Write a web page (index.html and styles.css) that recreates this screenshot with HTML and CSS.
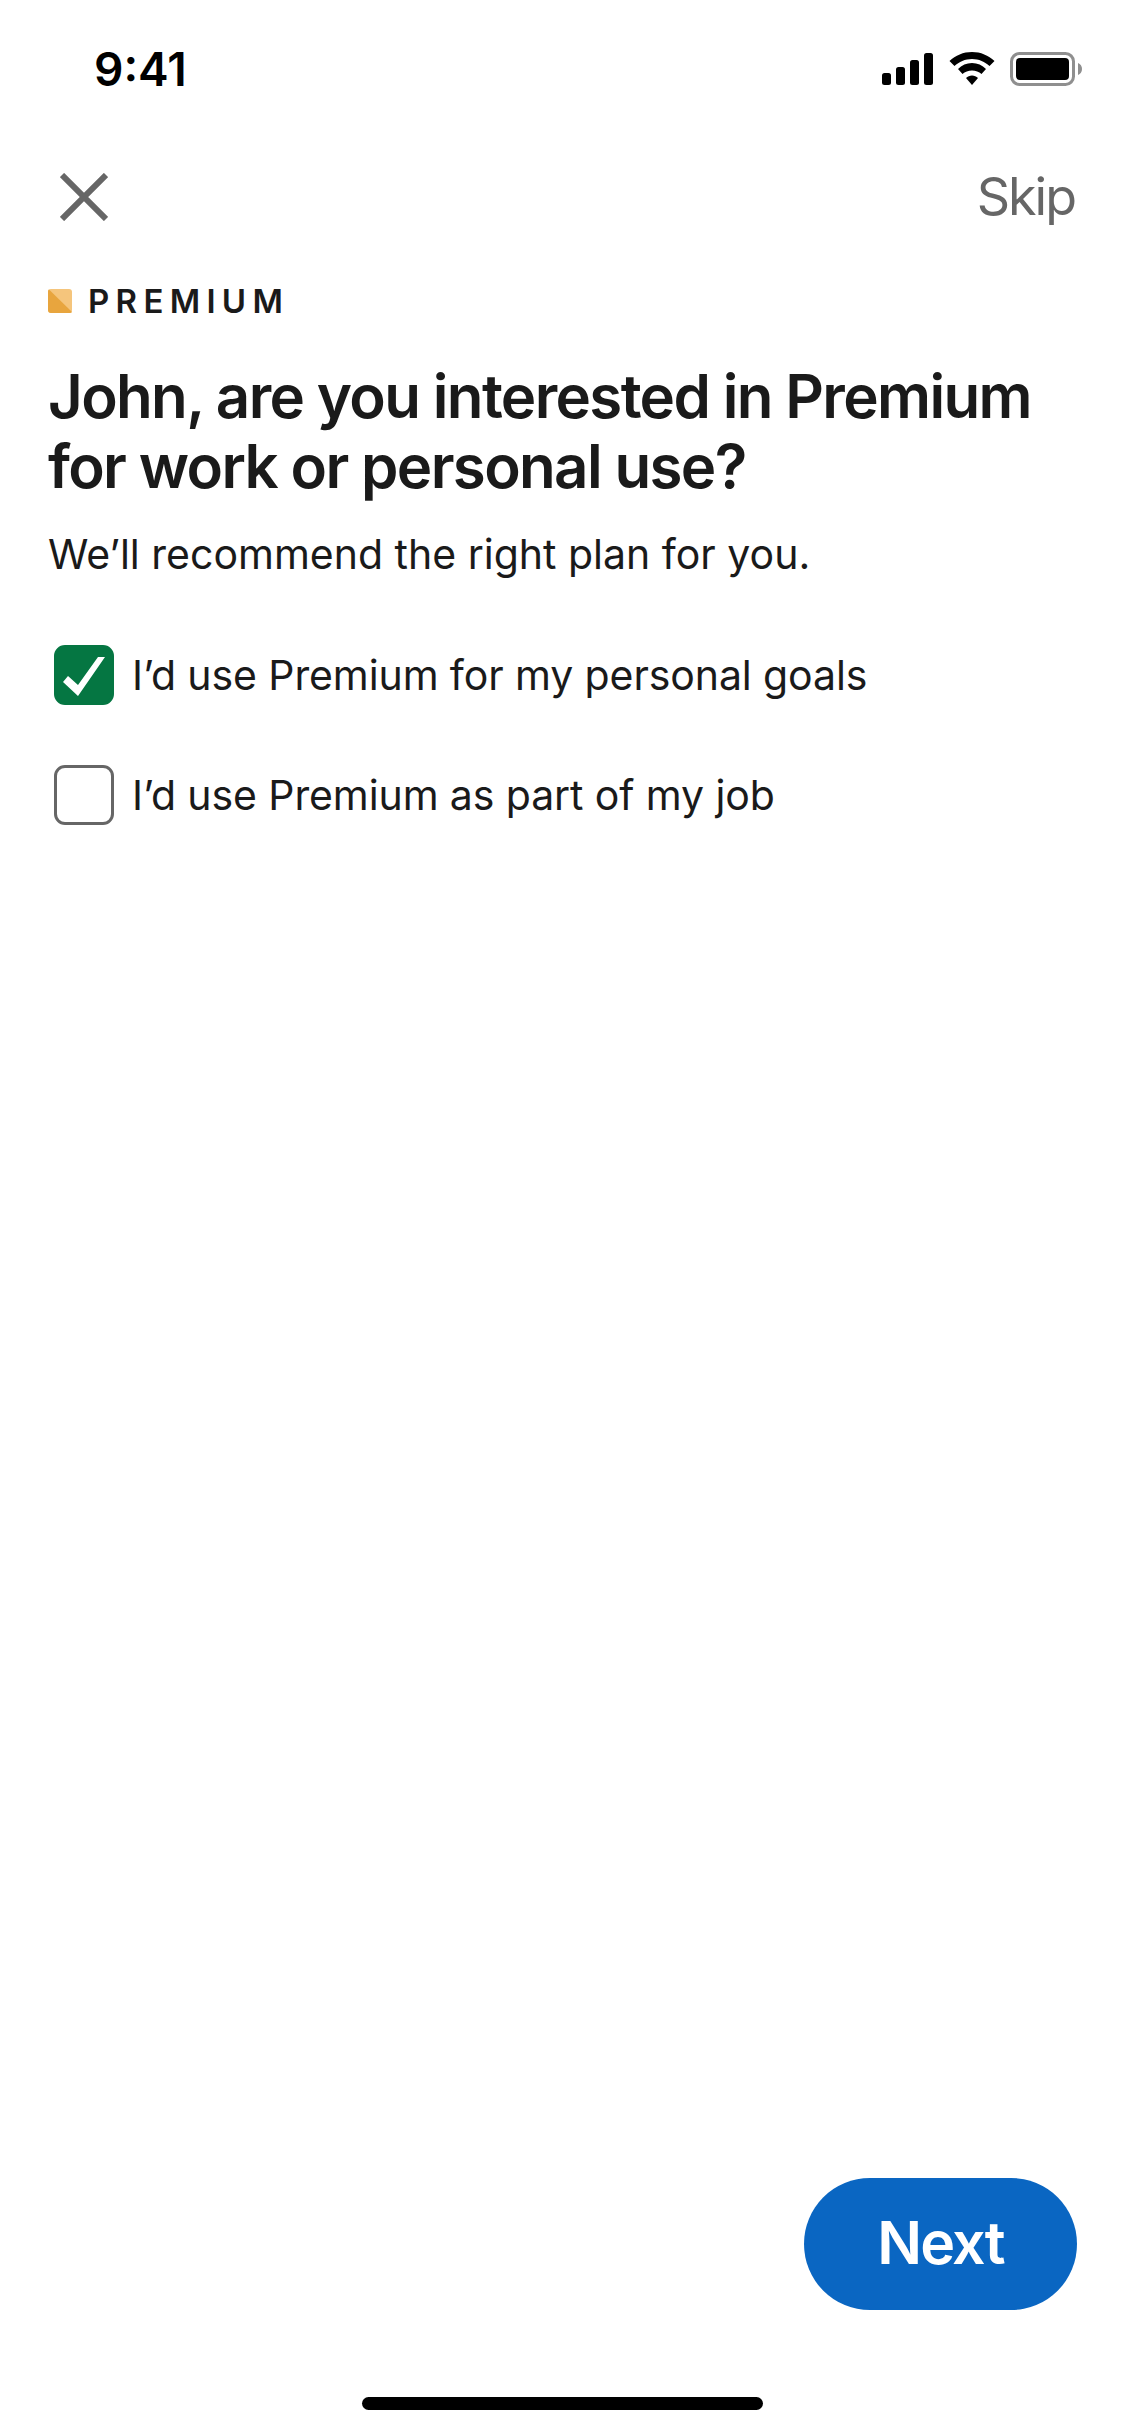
FILE: index.html
```html
<!DOCTYPE html>
<html lang="en">
<head>
<meta charset="utf-8">
<title>Premium</title>
<link rel="stylesheet" href="styles.css">
</head>
<body>
<div class="screen">
  <header class="status">
    <span class="time">9:41</span>
    <div class="status-icons">
      <svg class="ic-signal" width="52" height="32" viewBox="0 0 52 32"><rect x="0" y="20" width="9" height="12" rx="2.500"/><rect x="14" y="14" width="9" height="18" rx="2.500"/><rect x="28" y="7" width="9" height="25" rx="2.500"/><rect x="42" y="0" width="9" height="32" rx="2.500"/></svg>
      <svg class="ic-wifi" width="46" height="34" viewBox="0 0 46 34"><path d="M23 0C14.300 0 6.500 3.400 0.500 9L5.500 14C10 9.800 16.200 7 23 7S36 9.800 40.500 14L45.500 9C39.500 3.400 31.700 0 23 0Z"/><path d="M23 11C17.500 11 12.800 13.300 9 17L13.500 22C16 19.800 19.300 18.500 23 18.500S30 19.800 32.500 22L37 17C33.200 13.300 28.500 11 23 11Z"/><path d="M23 23.500C20.700 23.500 18.700 24.400 17 26L23 33L29 26C27.300 24.400 25.300 23.500 23 23.500Z"/></svg>
      <svg class="ic-battery" width="73" height="34" viewBox="0 0 73 34"><rect x="1.500" y="1.500" width="62" height="31" rx="8" fill="none" stroke="#8f8f8f" stroke-width="3"/><rect x="6" y="6" width="53" height="22" rx="4"/><path d="M68 11C70.500 12 72 14.300 72 17S70.500 22 68 23Z" fill="#8f8f8f"/></svg>
    </div>
  </header>

  <nav class="topbar">
    <svg class="ic-close" width="48" height="48" viewBox="0 0 48 48"><path d="M2 2L46 46M46 2L2 46" fill="none" stroke="#666666" stroke-width="6"/></svg>
    <span class="skip">Skip</span>
  </nav>

  <main class="content">
    <div class="brand">
      <svg class="ic-brand" width="24" height="24" viewBox="0 0 24 24"><rect width="24" height="24" rx="3" fill="#f5c57c"/><path d="M0 3C0 1.500 0.500 0.800 1 0.500L24 23C23.600 23.600 22.500 24 21 24H3C1.300 24 0 22.700 0 21Z" fill="#e8a53e"/></svg>
      <span class="brand-name">PREMIUM</span>
    </div>
    <h1 class="title">John, are you interested in Premium for work or personal use?</h1>
    <p class="subtitle">We’ll recommend the right plan for you.</p>
    <ul class="options">
      <li class="option">
        <span class="box box-on"><svg class="check" width="60" height="60" viewBox="0 0 60 60"><polygon points="9,37 14,31 24,40 44,12 51,12 24,51" fill="#ffffff"/></svg></span>
        <span>I’d use Premium for my personal goals</span>
      </li>
      <li class="option">
        <span class="box"></span>
        <span>I’d use Premium as part of my job</span>
      </li>
    </ul>
  </main>

  <footer class="footer">
    <button class="next" type="button">Next</button>
    <div class="home"></div>
  </footer>
</div>
</body>
</html>
```
FILE: styles.css
```css
* { box-sizing: border-box; }
html, body { margin: 0; padding: 0; background: #ffffff; }
body { font-family: Inter, "Liberation Sans", sans-serif; color: #1a1a1a; }

.screen { width: 1125px; height: 2436px; display: flex; flex-direction: column; }

.status { height: 152px; display: flex; justify-content: space-between; align-items: flex-start; padding: 46px 42px 0 94px; }
.time { font-size: 46px; line-height: 46px; font-weight: 600; color: #000000; }
.status-icons { display: flex; align-items: center; gap: 15px; padding-top: 6px; }
.status-icons svg { display: block; fill: #000000; }

.topbar { height: 90px; display: flex; justify-content: space-between; align-items: center; padding: 0 50px 0 60px; }
.ic-close { display: block; }
.skip { font-size: 52px; line-height: 60px; letter-spacing: -2px; color: #666666; }

.content { flex: 1; padding: 0 48px; }
.brand { display: flex; align-items: center; gap: 16px; height: 30px; margin-top: 44px; }
.ic-brand { display: block; }
.brand-name { font-size: 33px; line-height: 30px; font-weight: 600; letter-spacing: 6.300px; }
.title { margin: 45px 0 0; font-size: 60px; line-height: 70px; font-weight: 600; letter-spacing: -1.650px; }
.subtitle { margin: 26px 0 0; font-size: 41px; line-height: 54px; }

.options { list-style: none; margin: 64px 0 0; padding: 0 0 0 6px; }
.option { display: flex; align-items: center; gap: 18px; height: 60px; margin-bottom: 60px; font-size: 41px; line-height: 54px; letter-spacing: -0.100px; }
.box { width: 60px; height: 60px; border: 3px solid #666666; border-radius: 11px; display: flex; align-items: center; justify-content: center; flex: none; }
.box-on { background: #057642; border-color: #057642; }
.check { flex: none; margin: -3px; display: block; }

.footer { display: flex; flex-direction: column; align-items: flex-end; padding: 0 48px 26px; }
.next { width: 273px; height: 132px; padding: 0 0 3px; border: 0; border-radius: 66px; background: #0a66c2; color: #ffffff; font-family: inherit; font-size: 59px; letter-spacing: -1.800px; font-weight: 600; }
.home { align-self: center; width: 401px; height: 13px; margin-top: 87px; border-radius: 7px; background: #000000; }
```
